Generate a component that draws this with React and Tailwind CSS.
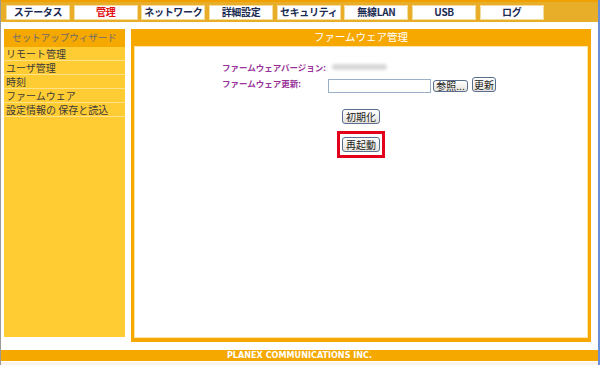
import React from "react";

const jp = { fontFamily: '"Noto Sans CJK JP", "Noto Sans", sans-serif' };

const tabs = ["ステータス", "管理", "ネットワーク", "詳細設定", "セキュリティ", "無線LAN", "USB", "ログ"];
const menu = ["リモート管理", "ユーザ管理", "時刻", "ファームウェア", "設定情報の 保存と読込"];

function Btn({ children, className = "" }) {
  return (
    <div
      className={
        "flex items-center justify-center rounded-[3px] border border-[#5a6f8f] bg-gradient-to-b from-[#ffffff] to-[#e4e2da] text-[10px] text-[#222] leading-none whitespace-nowrap shrink-0 " +
        className
      }
    >
      {children}
    </div>
  );
}

export default function App() {
  return (
    <div className="relative w-[600px] h-[365px] bg-white overflow-hidden" style={jp}>
      <div className="absolute left-0 top-0 h-full w-[1px] bg-[#9a9a9a]" />
      <div className="absolute right-0 top-0 h-full w-[2px] bg-[#6b8fd6]" />
      {/* top bar */}
      <div className="ml-[1px] w-[597px] h-[22px] bg-[#e8ae2a] border-t-[2px] border-[#f0a000] flex items-center pl-[5px] gap-[3.7px]">
        {tabs.map((t) => (
          <div
            key={t}
            className={
              "w-[64px] h-[15px] shrink-0 bg-white border border-[#f6dc9a] flex items-center justify-center text-[10px] font-bold leading-none whitespace-nowrap tracking-[-0.3px] " +
              (t === "管理" ? "text-[#e01010]" : "text-[#1c2b52]")
            }
          >
            {t}
          </div>
        ))}
      </div>
      {/* middle */}
      <div className="flex mt-[7px] pl-[4px] gap-[6px]">
        <div className="w-[121px] h-[308px] bg-[#ffcc33] flex flex-col shrink-0">
          <div className="h-[18px] bg-[#f5a800] flex items-center justify-center text-[9.5px] text-[#6b6b6b] leading-none whitespace-nowrap">
            セットアップウィザード
          </div>
          {menu.map((m) => (
            <div
              key={m}
              className="h-[14px] border-b border-[#ffe189] flex items-center pl-[2px] text-[10px] text-[#3a3a3a] leading-none whitespace-nowrap"
            >
              {m}
            </div>
          ))}
        </div>
        <div className="w-[460px] h-[313px] bg-[#f7a800] flex flex-col px-[3px] pb-[4px] shrink-0">
          <div className="h-[17px] flex items-center justify-center text-[10.5px] text-white leading-none">
            ファームウェア管理
          </div>
          <div className="flex-1 bg-white border border-[#ffe6a8] flex flex-col">
            <div className="pl-[87px] mt-[14px] flex items-center h-[12px]">
              <span className="text-[8.5px] font-bold text-[#993399] leading-none whitespace-nowrap">ファームウェアバージョン:</span>
              <span className="ml-[6px] w-[55px] h-[6px] rounded-full bg-[#d8d8d8] blur-[1.5px]" />
            </div>
            <div className="pl-[87px] mt-[4px] flex items-start h-[16px]">
              <span className="w-[106px] h-[12px] mt-[0px] flex items-center text-[8.5px] font-bold text-[#993399] leading-none whitespace-nowrap">ファームウェア更新:</span>
              <div className="w-[103px] h-[14px] mt-[2px] border border-[#9ab0c8] bg-white shrink-0" />
              <Btn className="ml-[2px] w-[35px] h-[12px] mt-[3px]">参照...</Btn>
              <Btn className="ml-[4px] w-[24px] h-[15px]">更新</Btn>
            </div>
            <div className="flex justify-center mt-[16px]">
              <Btn className="w-[38px] h-[15px]">初期化</Btn>
            </div>
            <div className="flex justify-center mt-[7px]">
              <div className="border-[3px] border-[#e3001b] pl-[2px] pr-[2px] pt-[3px] pb-[3px]">
                <Btn className="w-[38px] h-[15px]">再起動</Btn>
              </div>
            </div>
          </div>
        </div>
      </div>
      {/* footer */}
      <div className="absolute left-[1px] top-[350px] w-[597px] h-[11px] bg-[#f5a800] flex items-center justify-center text-[9px] font-bold text-white leading-none" style={{ fontFamily: '"DejaVu Sans Condensed", "DejaVu Sans", sans-serif' }}>
        PLANEX COMMUNICATIONS INC.
      </div>
      <div className="absolute left-[1px] top-[362px] w-[597px] h-[3px] bg-[#fbf4ea]" />
    </div>
  );
}
